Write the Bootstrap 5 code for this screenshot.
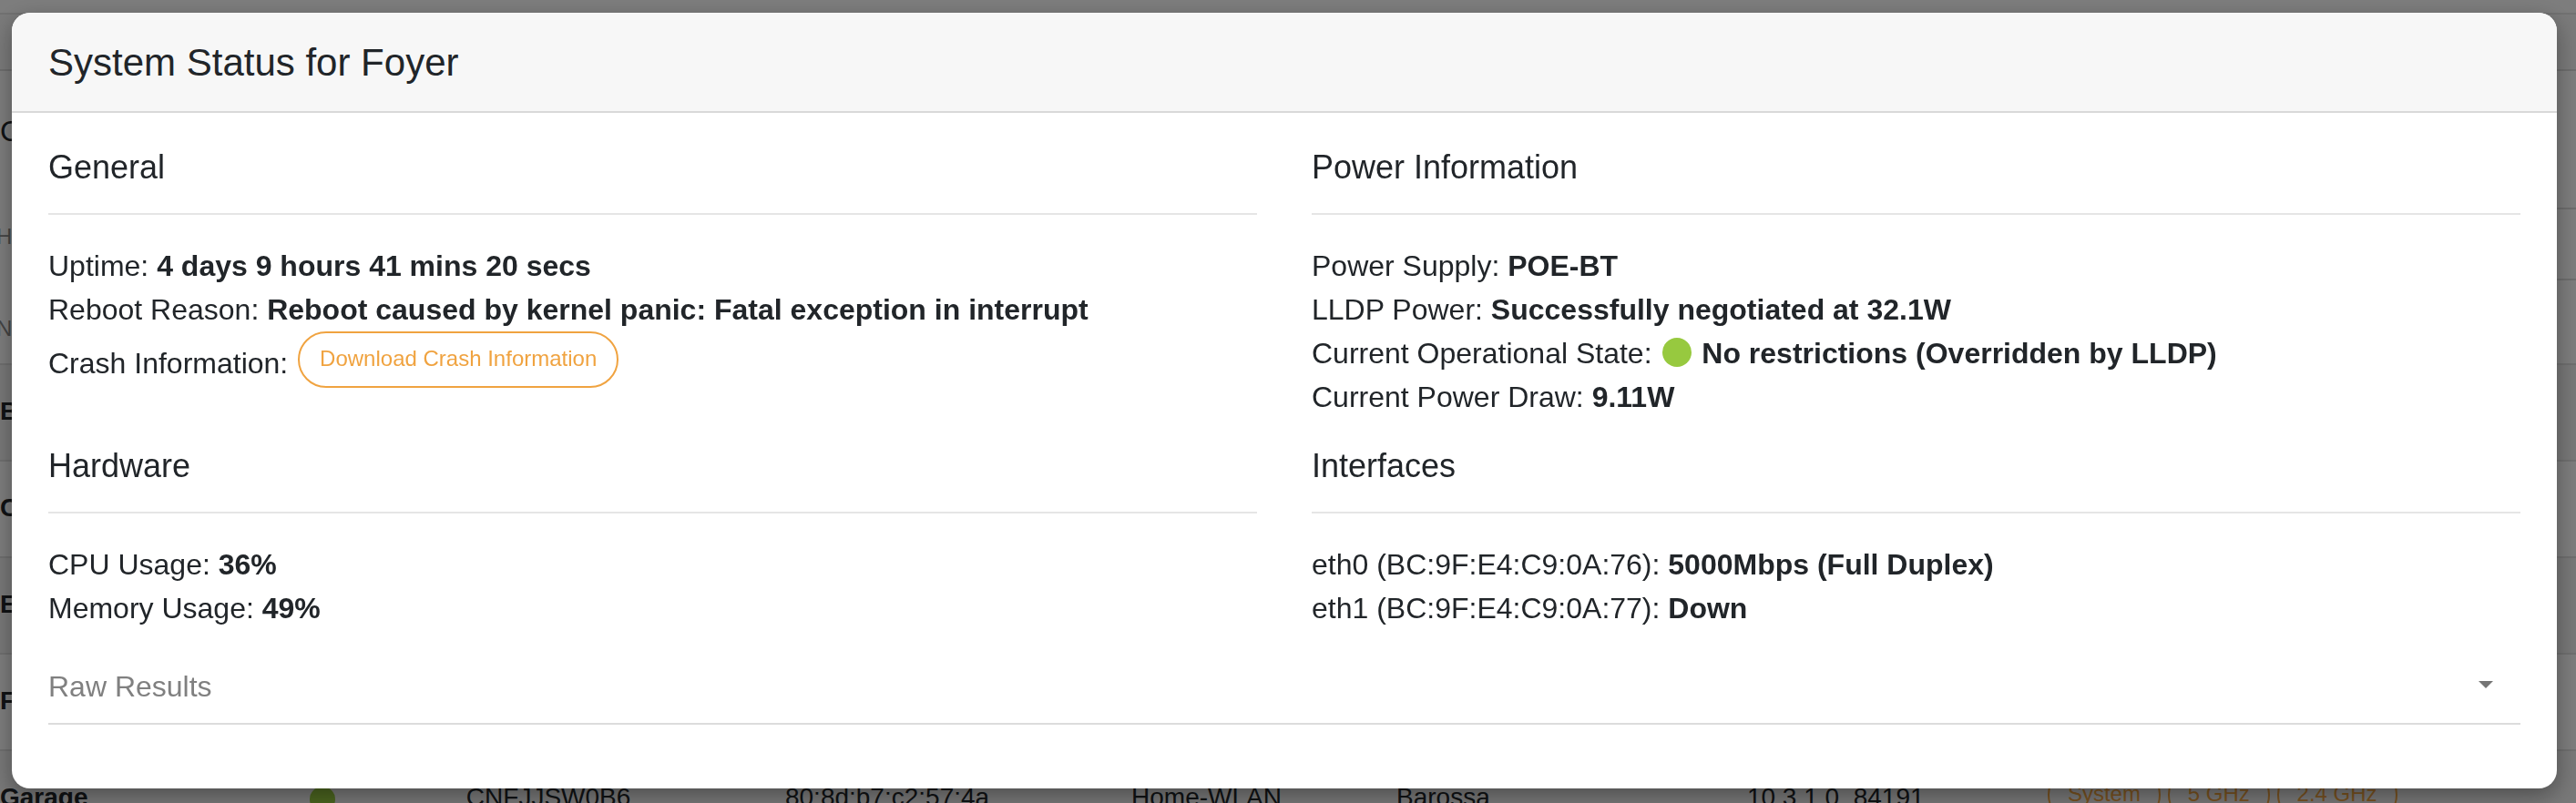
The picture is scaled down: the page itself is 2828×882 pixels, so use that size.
<!DOCTYPE html>
<html lang="en">
<head>
<meta charset="utf-8">
<meta name="viewport" content="width=device-width, initial-scale=1">
<title>System Status for Foyer</title>
<link rel="stylesheet" href="https://cdn.jsdelivr.net/npm/bootstrap@5.3.0/dist/css/bootstrap.min.css">
<style>
  html, body { height: 100%; }
  body { font: 400 32px/48px "Liberation Sans", Arial, sans-serif; color: #212529; background: #fbfbfb; overflow: hidden; }

  /* access point list behind the dialog */
  .ap-page { height: 100vh; overflow: hidden; }
  .ap-topbar { height: 16px; border-bottom: 2px solid #e2e2e2; }
  .ap-tabs { height: 62px; border-bottom: 2px solid #dadada; background: #f5f5f5; }
  .ap-heading, .ap-filter { margin-left: 40px; text-indent: -40px; border-bottom: 2px solid #dadada; }
  .ap-heading { height: 152px; padding-top: 42px; }
  .ap-filter { height: 78px; padding-top: 6px; color: #888; font-size: 24px; text-indent: -44px; }
  .ap-list { table-layout: fixed; margin: 0; white-space: nowrap; font-size: 28px; line-height: 36px; }
  .ap-list th, .ap-list td { padding: 0 0 2px; vertical-align: middle; border-bottom: 2px solid #dedede; color: #212529; background: none; }
  .ap-list thead th { height: 92px; padding-top: 16px; font-size: 24px; font-weight: 400; color: #888; text-indent: -4px; }
  .ap-list tbody tr { height: 106px; }
  .ap-list tbody tr:nth-child(odd) { background: #f0f0f0; }
  .ap-list tbody th { font-weight: 700; }
  .ap-list td.ap-actions { padding-bottom: 8px; }
  .ap-dot { display: inline-block; width: 28px; height: 28px; border-radius: 50%; background: #97c93f; vertical-align: middle; }
  .ap-pill { border: 2px solid #f0a340; border-radius: 32px; background: none; color: #f0a340; font-size: 24px; line-height: 36px; padding: 10px 20px 12px; }

  /* dialog */
  .modal-backdrop { --bs-backdrop-opacity: .5; }
  .status-dialog { max-width: none; margin: 14px 21px 16px 13px; }
  .status-dialog .modal-content { border: 0; border-radius: 20px; overflow: hidden; color: #212529; box-shadow: 0 8px 24px rgba(0, 0, 0, .35); }
  .status-dialog .modal-header { padding: 29px 40px 27px; background: #f7f7f7; border-bottom: 2px solid #d9d9d9; }
  .status-dialog .modal-title { font-size: 42px; line-height: 52px; font-weight: 400; }
  .status-dialog .modal-body { padding: 36px 40px 70px; }
  .status-grid { --bs-gutter-x: 60px; --bs-gutter-y: 0; }
  .status-title { font-size: 36px; line-height: 48px; font-weight: 400; margin: 0; padding-bottom: 26px; border-bottom: 2px solid #e5e5e5; }
  .status-facts { padding: 32px 0 28px; }
  .status-facts b { font-weight: 700; }
  .crash-btn { border: 2px solid #f0a340; border-radius: 32px; color: #f0a340; font-size: 24px; line-height: 36px; padding: 10px 22px 12px; margin-left: 2px; vertical-align: 8px; }
  .state-dot { display: inline-block; width: 32px; height: 32px; border-radius: 50%; background: #97c93f; vertical-align: -4px; margin: 0 2px 0 3px; }
  .raw-toggle { border: 0; border-bottom: 2px solid #dcdcdc; background: none; color: #808080; padding: 10px 30px 16px 0; }
</style>
</head>
<body>
<main class="ap-page" aria-hidden="true">
  <div class="ap-topbar"></div>
  <div class="ap-tabs"></div>
  <div class="ap-heading">C</div>
  <div class="ap-filter">H</div>
  <table class="table ap-list">
    <colgroup><col style="width:12.02%"><col style="width:6.08%"><col style="width:12.38%"><col style="width:13.44%"><col style="width:10.29%"><col style="width:13.61%"><col style="width:11.67%"><col></colgroup>
    <thead><tr><th>N</th><th></th><th></th><th></th><th></th><th></th><th></th><th></th></tr></thead>
    <tbody>
      <tr><th>B</th><td colspan="7"></td></tr>
      <tr><th>C</th><td colspan="7"></td></tr>
      <tr><th>E</th><td colspan="7"></td></tr>
      <tr><th>F</th><td colspan="7"></td></tr>
      <tr><th>Garage</th><td><span class="ap-dot"></span></td><td>CNFJJSW0B6</td><td>80:8d:b7:c2:57:4a</td><td>Home-WLAN</td><td>Barossa</td><td>10.3.1.0_84191</td>
        <td class="ap-actions"><button type="button" class="ap-pill">System</button> <button type="button" class="ap-pill">5 GHz</button> <button type="button" class="ap-pill">2.4 GHz</button></td></tr>
    </tbody>
  </table>
</main>

<div class="modal-backdrop show"></div>
<div class="modal d-block" tabindex="-1" role="dialog" aria-modal="true" aria-labelledby="statusTitle">
  <div class="modal-dialog status-dialog">
    <div class="modal-content">
      <div class="modal-header"><h1 class="modal-title" id="statusTitle">System Status for Foyer</h1></div>
      <div class="modal-body">
        <div class="row row-cols-2 status-grid">
          <section class="col">
            <h2 class="status-title">General</h2>
            <div class="status-facts">
              <div>Uptime: <b>4 days 9 hours 41 mins 20 secs</b></div>
              <div>Reboot Reason: <b>Reboot caused by kernel panic: Fatal exception in interrupt</b></div>
              <div>Crash Information: <button type="button" class="btn crash-btn">Download Crash Information</button></div>
            </div>
          </section>
          <section class="col">
            <h2 class="status-title">Power Information</h2>
            <div class="status-facts">
              <div>Power Supply: <b>POE-BT</b></div>
              <div>LLDP Power: <b>Successfully negotiated at 32.1W</b></div>
              <div>Current Operational State: <span class="state-dot"></span> <b>No restrictions (Overridden by LLDP)</b></div>
              <div>Current Power Draw: <b>9.11W</b></div>
            </div>
          </section>
          <section class="col">
            <h2 class="status-title">Hardware</h2>
            <div class="status-facts">
              <div>CPU Usage: <b>36%</b></div>
              <div>Memory Usage: <b>49%</b></div>
            </div>
          </section>
          <section class="col">
            <h2 class="status-title">Interfaces</h2>
            <div class="status-facts">
              <div>eth0 (BC:9F:E4:C9:0A:76): <b>5000Mbps (Full Duplex)</b></div>
              <div>eth1 (BC:9F:E4:C9:0A:77): <b>Down</b></div>
            </div>
          </section>
        </div>
        <button type="button" class="raw-toggle d-flex w-100 justify-content-between align-items-center text-start" aria-expanded="false">
          Raw Results
          <svg class="mb-1" width="16" height="8" viewBox="0 0 16 8" fill="#757575" aria-hidden="true"><path d="M0 0h16L8 8z"/></svg>
        </button>
      </div>
    </div>
  </div>
</div>
<script src="https://cdn.jsdelivr.net/npm/bootstrap@5.3.0/dist/js/bootstrap.bundle.min.js"></script>
</body>
</html>
